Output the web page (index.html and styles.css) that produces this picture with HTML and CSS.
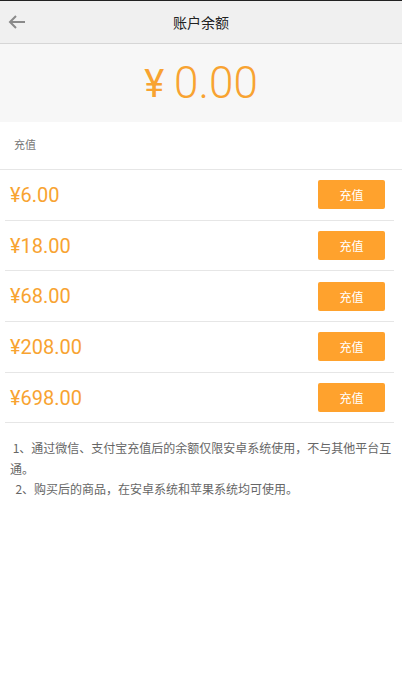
FILE: index.html
```html
<!DOCTYPE html>
<html lang="zh-CN">
<head>
    <meta charset="UTF-8">
    <meta name="viewport" content="width=device-width, initial-scale=1.0">
    <title>账户余额</title>
    <link rel="stylesheet" href="styles.css">
</head>
<body>
    <nav class="topbar">
        <span class="back">
            <svg width="18" height="14" viewBox="0 0 18 14">
                <path d="M17 7H2M8 1L2 7l6 6" fill="none" stroke="#8a8a8a" stroke-width="2"/>
            </svg>
        </span>
        <h1>账户余额</h1>
    </nav>

    <div class="balance">
        <span class="yen">¥</span><span class="amount">0.00</span>
    </div>

    <div class="section-title">充值</div>

    <ul class="plans">
        <li><span class="price">¥6.00</span><button>充值</button></li>
        <li><span class="price">¥18.00</span><button>充值</button></li>
        <li><span class="price">¥68.00</span><button>充值</button></li>
        <li><span class="price">¥208.00</span><button>充值</button></li>
        <li><span class="price">¥698.00</span><button>充值</button></li>
    </ul>

    <div class="notes">
        <p>&nbsp;1、通过微信、支付宝充值后的余额仅限安卓系统使用，不与其他平台互通。</p>
        <p>&nbsp;&nbsp;2、购买后的商品，在安卓系统和苹果系统均可使用。</p>
    </div>
</body>
</html>
```

FILE: styles.css
```css
body {
    font-family: Roboto, "Noto Sans CJK SC", sans-serif;
    margin: 0;
    padding: 0;
    background: #fff;
}
.topbar {
    height: 42px;
    border-top: 1px solid #222;
    border-bottom: 1px solid #d6d6d6;
    background-color: #f0f0f0;
    display: flex;
    align-items: center;
    justify-content: center;
    position: relative;
}
.topbar h1 {
    margin: 0;
    font-size: 14px;
    font-weight: normal;
    color: #222;
}
.back {
    position: absolute;
    left: 8px;
    top: 14px;
    line-height: 0;
}
.balance {
    height: 78px;
    background-color: #f7f7f7;
    display: flex;
    align-items: center;
    justify-content: center;
    color: #f8a331;
}
.yen {
    font-size: 38px;
    margin-right: 10px;
    margin-top: 2px;
}
.amount {
    font-size: 44px;
    font-weight: 300;
}
.section-title {
    height: 47px;
    line-height: 47px;
    padding-left: 14px;
    font-size: 11px;
    color: #777;
    border-bottom: 1px solid #e6e6e6;
}
.plans {
    list-style: none;
    margin: 0 8px 0 5px;
    padding: 0;
}
.plans li {
    height: 50.7px;
    box-sizing: border-box;
    border-bottom: 1px solid #e6e6e6;
    display: flex;
    align-items: center;
    justify-content: space-between;
    padding: 0 9px 0 5px;
}
.price {
    font-size: 20px;
    color: #f8a331;
}
.plans button {
    width: 67px;
    height: 29px;
    border: none;
    border-radius: 2px;
    background-color: #ffa22d;
    color: #fff;
    font-family: "Noto Sans CJK SC", sans-serif;
    font-size: 12px;
    padding: 0;
}
.notes {
    padding: 15px 2px 0 10px;
    font-size: 12px;
    line-height: 20.5px;
    color: #666;
    font-family: "Noto Sans CJK SC", sans-serif;
}
.notes p {
    margin: 0;
}
```
